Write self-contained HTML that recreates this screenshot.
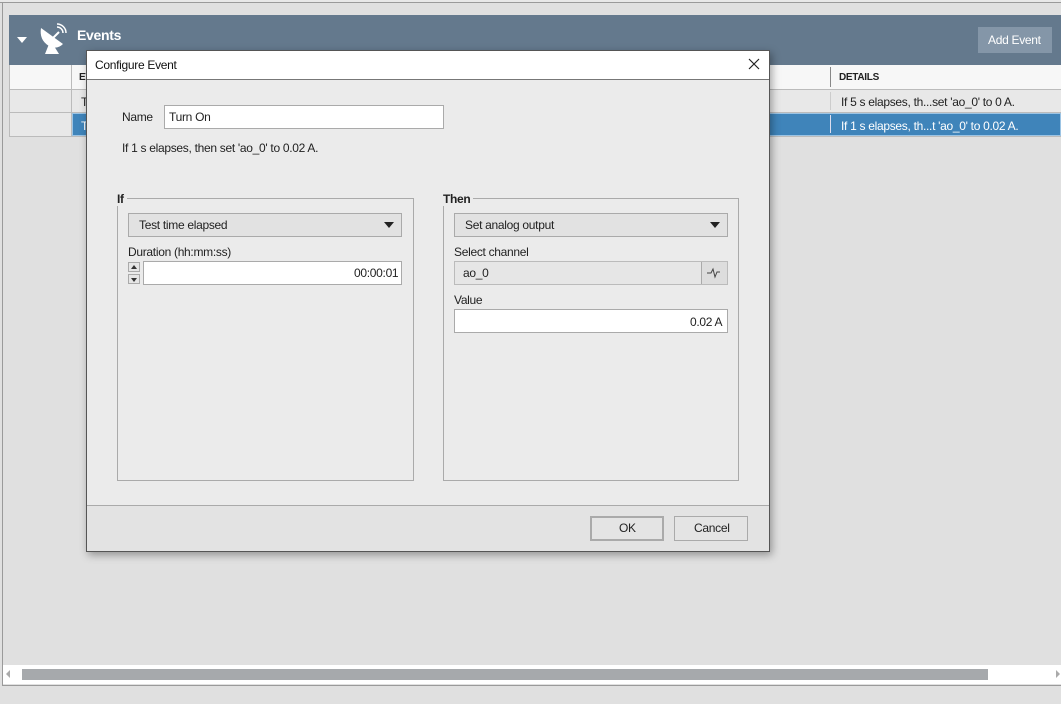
<!DOCTYPE html>
<html><head><style>
*{box-sizing:border-box;margin:0;padding:0}
body{width:1061px;height:704px;background:#e0e0e0;font-family:"Liberation Sans",sans-serif;font-size:12px;letter-spacing:-0.3px;color:#222;position:relative;overflow:hidden}
.a{position:absolute}
.t{position:absolute;white-space:nowrap}
</style></head><body>
<div class="a" style="left:0;top:0;width:1061px;height:3px;background:#e8e8e8;border-bottom:1px solid #9a9a9a"></div>
<div class="a" style="left:2px;top:3px;width:1px;height:683px;background:#9a9a9a"></div>
<div class="a" style="left:2px;top:685px;width:1059px;height:1px;background:#9a9a9a"></div>
<div class="a" style="left:9px;top:15px;width:1052px;height:50px;background:#64798d"></div>
<div class="a" style="left:17px;top:37px;width:0;height:0;border-left:5px solid transparent;border-right:5px solid transparent;border-top:6px solid #fff"></div>
<svg class="a" style="left:37px;top:22px" width="32" height="34" viewBox="0 0 32 34"><path d="M4 6 Q2 18 12 24 Q20 28 26 22 Z" fill="#fff"/><path d="M12 22 L8 32 L22 32 L17 24Z" fill="#fff"/><path d="M16 16 L22 10" stroke="#fff" stroke-width="2"/><path d="M20 5 a6 6 0 0 1 6 6 M20 2 a9 9 0 0 1 9 9" stroke="#fff" stroke-width="1.5" fill="none"/></svg>
<div class="t" style="left:77px;top:27px;color:#fff;font-weight:bold;font-size:14px">Events</div>
<div class="a" style="left:978px;top:27px;width:74px;height:26px;background:#8496a8"></div>
<div class="t" style="left:988px;top:33px;color:#fff;font-size:12px">Add Event</div>
<div class="a" style="left:9px;top:65px;width:1052px;height:24px;background:#f7f7f7;border-left:1px solid #bbb"></div>
<div class="a" style="left:9px;top:89px;width:1052px;height:48px;background:#e8e8e8;border:1px solid #bbb;border-right:none"></div>
<div class="a" style="left:9px;top:112px;width:1052px;height:1px;background:#bbb"></div>
<div class="a" style="left:71px;top:65px;width:1px;height:72px;background:#bbb"></div>
<div class="a" style="left:72px;top:113px;width:989px;height:23px;background:#3f84ba;border:1px solid #9cc4e4"></div>
<div class="t" style="left:79px;top:72px;font-weight:bold;font-size:10px">EV</div>
<div class="t" style="left:81px;top:95px">T</div>
<div class="t" style="left:81px;top:119px;color:#fff">T</div>
<div class="a" style="left:830px;top:67px;width:1px;height:20px;background:#888"></div>
<div class="a" style="left:830px;top:92px;width:1px;height:18px;background:#ccc"></div>
<div class="a" style="left:830px;top:115px;width:1px;height:18px;background:#dde"></div>
<div class="t" style="left:839px;top:72px;font-weight:bold;font-size:10px">DETAILS</div>
<div class="t" style="left:841px;top:95px">If 5 s elapses, th...set 'ao_0' to 0 A.</div>
<div class="t" style="left:841px;top:119px;color:#fff">If 1 s elapses, th...t 'ao_0' to 0.02 A.</div>
<div class="a" style="left:3px;top:665px;width:1058px;height:19px;background:#fff"></div>
<div class="a" style="left:22px;top:669px;width:966px;height:11px;background:#a6a9ac"></div>
<div class="a" style="left:6px;top:670px;width:0;height:0;border-top:4px solid transparent;border-bottom:4px solid transparent;border-right:4px solid #aaa"></div>
<div class="a" style="left:1056px;top:670px;width:0;height:0;border-top:4px solid transparent;border-bottom:4px solid transparent;border-left:4px solid #aaa"></div>
<div class="a" style="left:86px;top:50px;width:684px;height:502px;background:#ebebeb;border:1px solid #555;box-shadow:2px 3px 8px rgba(0,0,0,.35)"></div>
<div class="a" style="left:87px;top:51px;width:682px;height:29px;background:#fff;border-bottom:1px solid #777"></div>
<div class="t" style="left:95px;top:58px;font-size:12px;color:#111">Configure Event</div>
<svg class="a" style="left:748px;top:58px" width="12" height="12"><path d="M1 1L11 11M11 1L1 11" stroke="#222" stroke-width="1.2"/></svg>
<div class="t" style="left:122px;top:110px">Name</div>
<div class="a" style="left:164px;top:105px;width:280px;height:24px;background:#fff;border:1px solid #aaa"></div>
<div class="t" style="left:169px;top:110px">Turn On</div>
<div class="t" style="left:122px;top:141px">If 1 s elapses, then set 'ao_0' to 0.02 A.</div>
<div class="a" style="left:117px;top:198px;width:297px;height:283px;border:1px solid #aaa"></div>
<div class="t" style="left:117px;top:192px;background:#ebebeb;padding-right:3px;font-weight:bold">If</div>
<div class="a" style="left:128px;top:213px;width:274px;height:24px;background:#e2e2e2;border:1px solid #aaa"></div>
<div class="t" style="left:139px;top:218px">Test time elapsed</div>
<div class="a" style="left:384px;top:222px;border-left:5px solid transparent;border-right:5px solid transparent;border-top:6px solid #222"></div>
<div class="t" style="left:128px;top:245px">Duration (hh:mm:ss)</div>
<div class="a" style="left:128px;top:262px;width:12px;height:10px;background:#e6e6e6;border:1px solid #aaa"></div>
<div class="a" style="left:128px;top:274px;width:12px;height:10px;background:#e6e6e6;border:1px solid #aaa"></div>
<div class="a" style="left:131px;top:265px;border-left:3px solid transparent;border-right:3px solid transparent;border-bottom:4px solid #333"></div>
<div class="a" style="left:131px;top:278px;border-left:3px solid transparent;border-right:3px solid transparent;border-top:4px solid #333"></div>
<div class="a" style="left:143px;top:261px;width:259px;height:24px;background:#fff;border:1px solid #aaa"></div>
<div class="t" style="left:354px;top:266px">00:00:01</div>
<div class="a" style="left:443px;top:198px;width:296px;height:283px;border:1px solid #aaa"></div>
<div class="t" style="left:443px;top:192px;background:#ebebeb;padding-right:3px;font-weight:bold">Then</div>
<div class="a" style="left:454px;top:213px;width:274px;height:24px;background:#e2e2e2;border:1px solid #aaa"></div>
<div class="t" style="left:465px;top:218px">Set analog output</div>
<div class="a" style="left:710px;top:222px;border-left:5px solid transparent;border-right:5px solid transparent;border-top:6px solid #222"></div>
<div class="t" style="left:454px;top:245px">Select channel</div>
<div class="a" style="left:454px;top:261px;width:274px;height:24px;background:#e6e6e6;border:1px solid #bbb"></div>
<div class="t" style="left:463px;top:266px">ao_0</div>
<div class="a" style="left:701px;top:262px;width:26px;height:22px;background:#ddd;border-left:1px solid #aaa"></div>
<svg class="a" style="left:706px;top:266px" width="16" height="14"><path d="M1 7L5 7L7 3L9 11L11 6L14 6" stroke="#444" fill="none" stroke-width="1"/></svg>
<div class="t" style="left:454px;top:293px">Value</div>
<div class="a" style="left:454px;top:309px;width:274px;height:24px;background:#fff;border:1px solid #aaa"></div>
<div class="t" style="left:690px;top:315px">0.02 A</div>
<div class="a" style="left:87px;top:505px;width:682px;height:46px;background:#e3e3e3;border-top:1px solid #aaa"></div>
<div class="a" style="left:590px;top:516px;width:74px;height:25px;background:#e4e4e4;border:2px solid #aaa"></div>
<div class="t" style="left:619px;top:521px">OK</div>
<div class="a" style="left:674px;top:516px;width:74px;height:25px;background:#e4e4e4;border:1px solid #aaa"></div>
<div class="t" style="left:694px;top:521px">Cancel</div>
</body></html>
